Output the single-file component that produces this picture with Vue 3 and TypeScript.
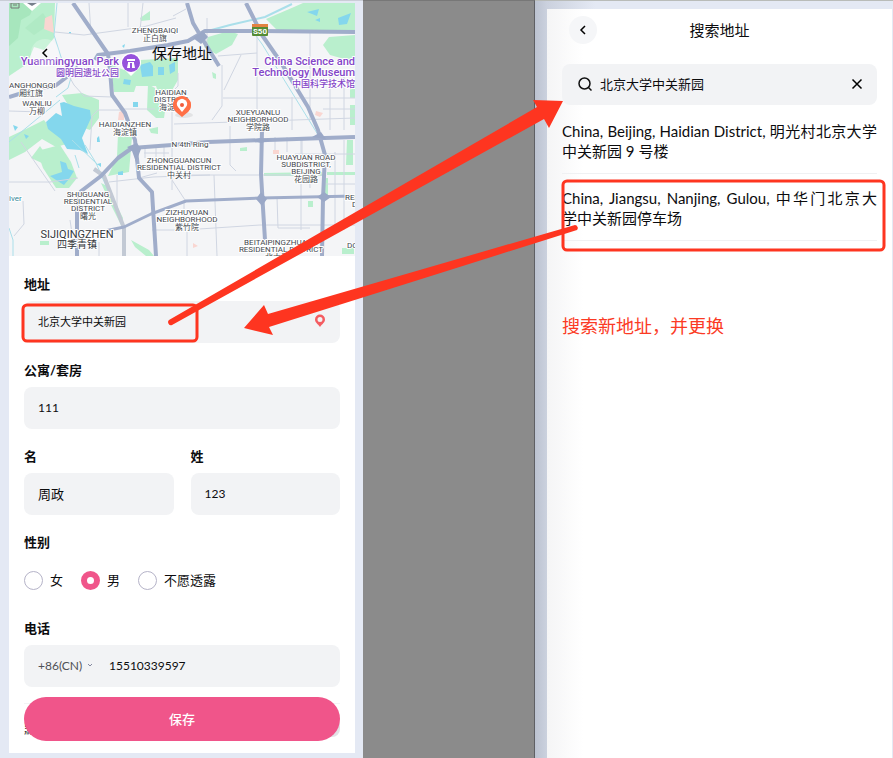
<script setup lang="ts">
import { ref } from 'vue'

interface MapLabel {
  x: number
  y: number
  lines: string[]
  kind?: 'town' | 'poi' | 'road' | 'water'
  anchor?: 'start' | 'middle' | 'end'
}

interface Option {
  value: string
  label: string
}

const address = ref('北京大学中关新园')
const unit = ref('111')
const givenName = ref('周政')
const familyName = ref('123')
const gender = ref('male')
const dialCode = ref('+86(CN)')
const phone = ref('15510339597')
const query = ref('北京大学中关新园')

const genders: Option[] = [
  { value: 'female', label: '女' },
  { value: 'male', label: '男' },
  { value: 'private', label: '不愿透露' },
]

const results: string[] = [
  'China, Beijing, Haidian District, 明光村北京大学中关新园 9 号楼',
  // The word joiner keeps 学 and 中 on the same line.
  'China, Jiangsu, Nanjing, Gulou, 中华门北京大学\u2060中关新园停车场',
]

const labels: MapLabel[] = [
  { x: 155, y: 33, lines: ['ZHENGBAIQI', '正白旗'] },
  { x: 9, y: 88, lines: ['ANGHONGQI'], anchor: 'start' },
  { x: 31, y: 96, lines: ['厢红旗'] },
  { x: 37, y: 106, lines: ['WANLIU', '万柳'] },
  { x: 171, y: 95, lines: ['HAIDIAN', 'DISTRICT', '海淀区'] },
  { x: 125, y: 127, lines: ['HAIDIANZHEN', '海淀镇'] },
  { x: 258, y: 115, lines: ['XUEYUANLU', 'NEIGHBORHOOD', '学院路'] },
  { x: 179, y: 163, lines: ['ZHONGGUANCUN', 'RESIDENTIAL DISTRICT', '中关村'] },
  { x: 306, y: 160, lines: ['HUAYUAN ROAD', 'SUBDISTRICT,', 'BEIJING', '花园路'] },
  { x: 88, y: 197, lines: ['SHUGUANG', 'RESIDENTIAL', 'DISTRICT', '曙光'] },
  { x: 187, y: 215, lines: ['ZIZHUYUAN', 'NEIGHBORHOOD', '紫竹院'] },
  { x: 281, y: 245, lines: ['BEITAIPINGZHUANG', 'RESIDENTIAL DISTRICT', '北太平庄'] },
  { x: 345, y: 200, lines: ['RESID'], anchor: 'start' },
  { x: 352, y: 207, lines: ['DIST'], anchor: 'start' },
  { x: 347, y: 248, lines: ['DONG'], anchor: 'start' },
  { x: 77, y: 238, lines: ['SIJIQINGZHEN', '四季青镇'], kind: 'town' },
  { x: 119, y: 65, lines: ['Yuanmingyuan Park', '圆明园遗址公园'], kind: 'poi', anchor: 'end' },
  { x: 355, y: 65, lines: ['China Science and', 'Technology Museum', '中国科学技术馆'], kind: 'poi', anchor: 'end' },
  { x: 190, y: 147, lines: ['N 4th Ring'], kind: 'road' },
  { x: 9, y: 201, lines: ['iver'], kind: 'water', anchor: 'start' },
]

function isChinese(line: string): boolean {
  return /[\u4e00-\u9fff]/.test(line)
}

function baseline(label: MapLabel, index: number): number {
  const step = label.kind === 'town' ? 10 : label.kind === 'poi' ? 11 : 7
  const extra = !label.kind && isChinese(label.lines[index]) && index > 0 ? 1 : 0
  return label.y + index * step + extra
}
</script>

<template>
  <main class="board">
    <section class="phone left">
      <div class="screen">
        <header class="map">
          <svg class="map-art" viewBox="9 3 346 253" role="img" aria-label="地图">
            <rect x="9" y="3" width="346" height="253" fill="#f4f5f7" />
            <g fill="#b9efcd">
              <path d="M9 3H55L54 38L44 50L34 47L27 64L9 76Z" />
              <path d="M110 64L124 70L140 60L178 58V80L171 92H158L156 86L136 86L134 92H114Z" />
              <path d="M62 95L82 93L99 100V118L90 130L78 126L70 108Z" />
              <path d="M9 137L28 128L44 120L50 128L70 143L56 147L42 139L25 152L9 160Z" />
              <path d="M37 151L60 145L71 162L77 178L69 188L56 188L43 168Z" />
              <path d="M31 158L40 146L48 158L44 164Z" />
              <path d="M118 134L132 137L129 172L108 176L117 157Z" />
              <path d="M148 84L155 88V100L166 104L164 118H156L147 110Z" />
              <path d="M266 19L294 7L303 3H355V31H306L277 30Z" />
              <path d="M355 35V62L330 55L323 45L329 37Z" />
              <path d="M208 37L229 31L238 34L232 45L216 54L204 47Z" />
              <path d="M140 18L150 11L150 20L141 21Z" />
              <path d="M264 173L322 172V176H264ZM327 172H355V175H327Z" />
              <path d="M347 140H353V165H346ZM350 80H355V98H350ZM350 105H355V125H350Z" />
              <path d="M101 183L107 186L123 218L121 225L112 207Z" />
              <path d="M131 240L149 250L154 256H146L135 247ZM40 241H49V245H40Z" />
              <path d="M308 201H313V207H308ZM322 178H328V199H322ZM342 248H354V254H342Z" />
              <path d="M240 148L247 147V151H240ZM149 129L158 127V134L151 133ZM212 72L216 74V79L213 78Z" />
            </g>
            <g fill="#a7e6bd">
              <path d="M9 3H35L30 15L21 20L18 38L9 46Z" />
              <path d="M25 28L43 13L50 24L34 35Z" opacity=".5" />
            </g>
            <g fill="#84d7ed">
              <path d="M46 122L56 113L62 116L60 103L64 102L74 106L90 110L91 118L82 138L88 154L80 150L67 149L61 139L48 129Z" />
              <path d="M50 176L62 172L60 161L66 163L68 169L74 171L69 179L64 185L56 180Z" />
              <path d="M140 65L150 62L153 66V76L142 77Z" />
              <path d="M158 67H164V75H158ZM169 65L175 62V71L170 74ZM124 79L131 80L130 85L123 84ZM133 102H138V107H133Z" />
              <path d="M97 138L99 136L100 142H97ZM97 164L101 163V167ZM118 172L123 171V175H118ZM13 125L18 127L15 131Z" />
              <path d="M69 32H71V34H69ZM122 46L125 44L124 48ZM24 134L29 136L26 139Z" />
              <path d="M307 12L319 9L317 16ZM338 18L351 13L347 24L339 25ZM315 20L320 18V22Z" />
            </g>
            <g fill="#f9d6d1">
              <path d="M45 18L52 15L54 33L44 29ZM273 150H279V154H273ZM316 111L323 113L320 117L315 115ZM119 112L124 110V120H118ZM193 243L198 246L193 248Z" />
            </g>
            <g class="stream">
              <path d="M57 3L54 35L62 60L72 74L68 88L56 97" />
              <path d="M9 142L60 100M72 140L98 165M75 155L79 168" />
              <path d="M204 32L230 25L265 17L292 4" stroke-width="2" />
              <path d="M256 36L262 44L320 138" />
              <path d="M85 145L96 163L124 227V256M9 228L13 240V256" />
            </g>
            <g class="minor">
              <path d="M9 111L42 112M9 182H50L78 178M55 32L84 35L143 27L176 18M89 3L91 34M128 3V27M143 3L140 30M173 16L186 9" />
              <path d="M21 142L55 191M65 69L74 85L84 96L112 97M90 150L92 116L98 110H124M124 109L155 109" />
              <path d="M178 73V86L172 92V190M207 18V47M222 65V106L212 120M218 56L257 53M257 30V110M310 30V120M330 70V130M344 70V130M223 98H355M174 124L355 118" />
              <path d="M241 55L224 90M172 160L180 175H325M323 109H355M230 126V165L236 171M292 97V130M302 137V172M295 154H355M277 197L278 228H310M301 138V230" />
              <path d="M109 182L153 177L210 175M139 178L157 173M117 175V208M172 180L185 200M152 230H184L260 225H355M184 200V228M214 175L217 256M187 228V256M99 242V256M70 220L73 240M23 201L24 224L14 236" />
              <path d="M275 137V150M287 137V152M309 155L310 188M323 184H355M335 152V230M344 140V230M145 145V158M156 145V169M164 145V158M144 153H169" />
            </g>
            <g class="artery pale">
              <path d="M94 169L104 176L124 228V256" />
            </g>
            <g class="artery">
              <path d="M73 3L108 54L110 70L112 95L125 113L135 140L139 178L152 192L156 256" />
              <path d="M9 97L38 88L55 86L68 76L78 67" />
              <path d="M95 60L98 55L130 51L168 45L188 41L205 31H261L355 32" />
              <path d="M80 192L101 176L118 158L132 148L172 145L208 142L325 138L355 137" />
              <path d="M80 192L77 212V256" />
              <path d="M187 3L193 23L203 40L219 66" />
              <path d="M246 3L262 35L280 61L308 107L318 130L325 155L323 198L322 256" />
              <path d="M262 130L261 174L263 208L265 240" />
              <path class="thin" d="M100 232L124 227L151 214L186 201L261 198L355 196" />
            </g>
            <g fill="#9aa8c7">
              <path d="M127 147L137 143L141 149L136 162L132 151ZM256 199L261 192L267 199L262 206ZM317 197L324 192L331 197L324 202ZM312 137L321 132L326 139ZM251 140L261 138L272 140L261 143ZM193 38L203 31L208 37L201 44Z" />
            </g>

            <g class="shield">
              <rect x="252" y="24" width="16" height="12" rx="1" fill="#548c35" />
              <path d="M252 24H268V27H252Z" fill="#e38241" />
              <text x="260" y="34">S50</text>
            </g>

            <g
              v-for="label in labels"
              :key="label.lines[0] + label.x"
              :class="['label', label.kind]"
              :text-anchor="label.anchor ?? 'middle'"
            >
              <text
                v-for="(line, i) in label.lines"
                :key="line"
                :class="{ zh: isChinese(line) }"
                :x="label.x"
                :y="baseline(label, i)"
              >{{ line }}</text>
            </g>

            <g>
              <path d="M131 76L122 67A10 10 0 1 1 140 67Z" fill="#fff" />
              <circle cx="131" cy="63" r="9" fill="#9652dc" />
              <path d="M127 59H135V61H127ZM128 62H134V63H128ZM128 63H130V68H127ZM132 63H134L135 68H132Z" fill="#fff" />
              <path d="M23 3H41L32 11Z" fill="#fff" />
              <path d="M27 3H37L32 6Z" fill="#77808c" />
              <path d="M11 3H19V8H11Z" fill="none" stroke="#777" />
              <path d="M13 5H17" stroke="#777" />
            </g>
            <g>
              <ellipse cx="184" cy="115" rx="9" ry="3" fill="#000" opacity=".07" />
              <path d="M182 117L176 112A9 9 0 1 1 188 112Z" fill="#ff7047" />
              <circle cx="182" cy="105" r="9" fill="#ff7047" />
              <path d="M182 112L178 107A5 5 0 1 1 186 107Z" fill="#fff" />
              <circle cx="182" cy="105" r="2" fill="#f15b3c" />
            </g>
          </svg>
          <div class="map-bar">
            <button class="back glass" type="button" aria-label="返回">
              <svg viewBox="0 0 20 20"><path d="M14 2L6 10L14 18" /></svg>
            </button>
            <h1>保存地址</h1>
          </div>
        </header>

        <form class="form" @submit.prevent>
          <div class="group">
            <label for="address">地址</label>
            <div class="field">
              <input id="address" v-model="address" class="small" type="text" />
              <svg class="pin" viewBox="0 0 24 28">
                <path fill-rule="evenodd" d="M12 1A10 10 0 0 0 2 11C2 17 7 19 12 26C17 19 22 17 22 11A10 10 0 0 0 12 1ZM12 6A5 5 0 1 1 12 16A5 5 0 1 1 12 6Z" />
              </svg>
            </div>
          </div>
          <div class="group">
            <label for="unit">公寓/套房</label>
            <div class="field"><input id="unit" v-model="unit" type="text" /></div>
          </div>
          <div class="pair">
            <div class="group">
              <label for="given">名</label>
              <div class="field"><input id="given" v-model="givenName" class="cjk" type="text" /></div>
            </div>
            <div class="group">
              <label for="family">姓</label>
              <div class="field"><input id="family" v-model="familyName" type="text" /></div>
            </div>
          </div>
          <fieldset class="group">
            <legend>性别</legend>
            <div class="radios">
              <label v-for="g in genders" :key="g.value" class="radio">
                <input v-model="gender" type="radio" name="gender" :value="g.value" />
                <span>{{ g.label }}</span>
              </label>
            </div>
          </fieldset>
          <div class="group">
            <label for="phone">电话</label>
            <div class="field">
              <select v-model="dialCode" aria-label="区号">
                <option>+86(CN)</option>
              </select>
              <svg class="caret" viewBox="0 0 6 4"><path d="M1 1L3 3L5 1" /></svg>
              <input id="phone" v-model="phone" type="tel" />
            </div>
          </div>
          <div class="save">
            <div class="behind"><span>默</span></div>
            <button type="submit">保存</button>
          </div>
        </form>
      </div>
    </section>

    <div class="gutter"></div>

    <section class="phone right">
      <div class="screen search-screen">
        <header class="search-head">
          <button class="back" type="button" aria-label="返回">
            <svg viewBox="0 0 20 20"><path d="M14 2L6 10L14 18" /></svg>
          </button>
          <h2>搜索地址</h2>
        </header>
        <div class="search">
          <svg class="lens" viewBox="0 0 28 28"><circle cx="13" cy="13" r="11" /><path d="M21 21L27 27" /></svg>
          <input v-model="query" type="text" aria-label="搜索地址" />
          <button class="clear" type="button" aria-label="清除" @click="query = ''">
            <svg viewBox="0 0 24 24"><path d="M3 3L21 21M21 3L3 21" /></svg>
          </button>
        </div>
        <ul class="results">
          <li v-for="item in results" :key="item">{{ item }}</li>
        </ul>
        <p class="note">搜索新地址，并更换</p>
      </div>
    </section>

    <svg class="marks" viewBox="0 0 893 758" aria-hidden="true">
      <rect x="23" y="305" width="174" height="36" rx="4" />
      <rect x="563" y="181" width="321" height="69" rx="4" />
      <path class="solid" d="M169 320L537 107L533 100L563 101L549 128L544 119L172 325A3 3 0 0 1 169 320Z" />
      <path class="solid" d="M575 225L268 314L264 305L244 328L273 335L269 327L577 230A3 3 0 0 0 575 225Z" />
    </svg>
  </main>
</template>

<style>
body {
  margin: 0;
}
</style>

<style scoped>
* {
  box-sizing: border-box;
}

.board {
  position: relative;
  display: grid;
  grid-template-columns: 363fr 172fr 358fr;
  min-height: 100vh;
  font-family: Lato, "Noto Sans CJK SC", sans-serif;
  color: #0c0c0e;
}

.phone {
  min-width: 0;
  background: #e4e9f4;
}

.left {
  padding: 3px 8px 4px 9px;
  box-shadow: inset 0 1px #c9cdd6;
}

.screen {
  background: #fff;
}

.gutter {
  background: #8b8b8b;
  border-top: 1px solid #777;
  border-right: 1px solid #5f6064;
}

.right {
  display: flex;
  padding: 9px 1px 0 12px;
  background: linear-gradient(90deg, #bcc3d1, #cbd1de 12px, #e4e9f4 60px);
  box-shadow: inset 0 1px #b9bcb9;
}

.map {
  position: relative;
}

.map-art {
  display: block;
  width: 100%;
  height: auto;
}

.stream {
  fill: none;
  stroke: #aadfea;
  stroke-width: 1;
}

.minor {
  fill: none;
  stroke: #d0d6e2;
  stroke-width: 1;
}

.artery {
  fill: none;
  stroke: #a0adca;
  stroke-width: 4;
  stroke-linejoin: round;
}

.thin {
  stroke-width: 3;
}

.pale {
  stroke: #c2c9d4;
}

.label {
  font: 400 8px Roboto, "Noto Sans CJK SC", sans-serif;
  fill: #44484e;
  stroke: #fff;
  stroke-width: 2px;
  stroke-linejoin: round;
  paint-order: stroke;
}

.town {
  font-size: 11px;
  fill: #34373c;
}

.town .zh {
  font-size: 10px;
}

.poi {
  font-size: 11px;
  font-weight: 500;
  fill: #8446c8;
}

.poi .zh {
  font-size: 9px;
}

.water {
  font-size: 8px;
  fill: #368799;
}

.shield text {
  font: 700 8px Roboto, sans-serif;
  fill: #fff;
  text-anchor: middle;
}

.map-bar {
  position: absolute;
  inset: 36px 22px auto;
  display: grid;
  grid-template-columns: 28px 1fr 28px;
  align-items: center;
}

h1,
h2 {
  margin: 0;
  font-size: 15px;
  line-height: 28px;
  font-weight: 400;
  text-align: center;
}

.back {
  display: grid;
  place-items: center;
  width: 28px;
  height: 28px;
  padding: 0;
  border: 0;
  border-radius: 50%;
  background: #f5f6f8;
}

.glass {
  background: rgba(255, 255, 255, 0.25);
}

.back svg {
  width: 10px;
  height: 10px;
  fill: none;
  stroke: #000;
  stroke-width: 3;
}

.form {
  display: flex;
  flex-direction: column;
  gap: 18px;
  padding: 19px 15px 12px;
}

.group {
  display: flex;
  flex-direction: column;
  gap: 8px;
  flex: 1;
  min-width: 0;
  margin: 0;
  padding: 0;
  border: 0;
}

.group > label,
legend {
  padding: 0;
  font-size: 13px;
  line-height: 18px;
  font-weight: 700;
}

.pair {
  display: flex;
  gap: 17px;
}

.field {
  display: flex;
  align-items: center;
  height: 42px;
  padding: 0 14px 2px;
  border-radius: 8px;
  background: #f2f3f5;
}

input,
select,
button {
  font-family: inherit;
  color: inherit;
}

.field input,
.search input {
  flex: 1;
  min-width: 0;
  width: 100%;
  height: 24px;
  padding: 0;
  border: 0;
  outline: 0;
  background: none;
  font-size: 12px;
}

.field .small {
  font-size: 11px;
}

.field .cjk,
.search input {
  font-size: 13px;
}

.pin {
  width: 12px;
  height: 14px;
  fill: #f45c61;
}

select {
  appearance: none;
  padding: 0;
  border: 0;
  background: none;
  font-size: 12px;
  color: #4f5156;
}

.caret {
  width: 6px;
  height: 4px;
  margin: 0 16px 0 4px;
  fill: none;
  stroke: #8589a0;
}

.radios {
  display: flex;
  align-items: center;
  gap: 18px;
  height: 42px;
  margin-top: 8px;
}

.radio {
  display: flex;
  align-items: center;
  gap: 7px;
  font-size: 13px;
  line-height: 18px;
}

.radio input {
  appearance: none;
  width: 19px;
  height: 19px;
  margin: 0;
  border: 1px solid #b5b3c8;
  border-radius: 50%;
  background: #fff;
}

.radio input:checked {
  border: 6px solid #f0558a;
}

.save {
  position: relative;
  margin-top: -8px;
}

.save button {
  position: relative;
  display: block;
  width: 100%;
  height: 44px;
  padding: 0 0 2px;
  border: 0;
  border-radius: 22px;
  background: #f0558a;
  color: #fff;
  font-size: 13px;
  font-weight: 500;
}

.behind {
  position: absolute;
  inset: 6px 0 4px;
  display: flex;
  align-items: flex-end;
  border-top: 1px solid #f3f4f6;
  border-radius: 0 0 8px;
  background: linear-gradient(175deg, #fff 60%, #e2e2e6 62%);
  background-position: right;
  background-size: 20px 100%;
  background-repeat: no-repeat;
  font-size: 13px;
  line-height: 18px;
}

.search-screen {
  flex: 1;
  min-width: 0;
  padding: 7px 15px;
  background: linear-gradient(90deg, #f5f5f6, #fff 36px);
}

.search-head {
  display: grid;
  grid-template-columns: 28px 1fr 28px;
  padding: 0 7px;
}

.search {
  display: flex;
  align-items: center;
  height: 41px;
  margin-top: 20px;
  padding: 0 14px 2px 16px;
  border-radius: 8px;
  background: #f2f3f5;
}

.lens {
  width: 14px;
  height: 14px;
  margin-right: 8px;
  fill: none;
  stroke: #111;
  stroke-width: 3;
}

.clear {
  display: grid;
  place-items: center;
  width: 12px;
  height: 20px;
  padding: 0;
  border: 0;
  background: none;
}

.clear svg {
  width: 12px;
  height: 12px;
  stroke: #000;
  stroke-width: 3;
}

.results {
  margin: 2px 0 0;
  padding: 0;
  list-style: none;
}

.results li {
  padding: 14px 0 12px;
  border-bottom: 1px solid #f0f1f3;
  font-size: 15px;
  line-height: 20px;
  text-align: justify;
}

.note {
  margin: 72px 0 0;
  font-size: 18px;
  line-height: 26px;
  color: #fb3a24;
}

.marks {
  position: absolute;
  top: 0;
  left: 0;
  width: 100%;
  height: auto;
  pointer-events: none;
  fill: none;
  stroke: #fe3520;
  stroke-width: 3px;
}

.marks .solid {
  fill: #fe3520;
  stroke: none;
}
</style>
